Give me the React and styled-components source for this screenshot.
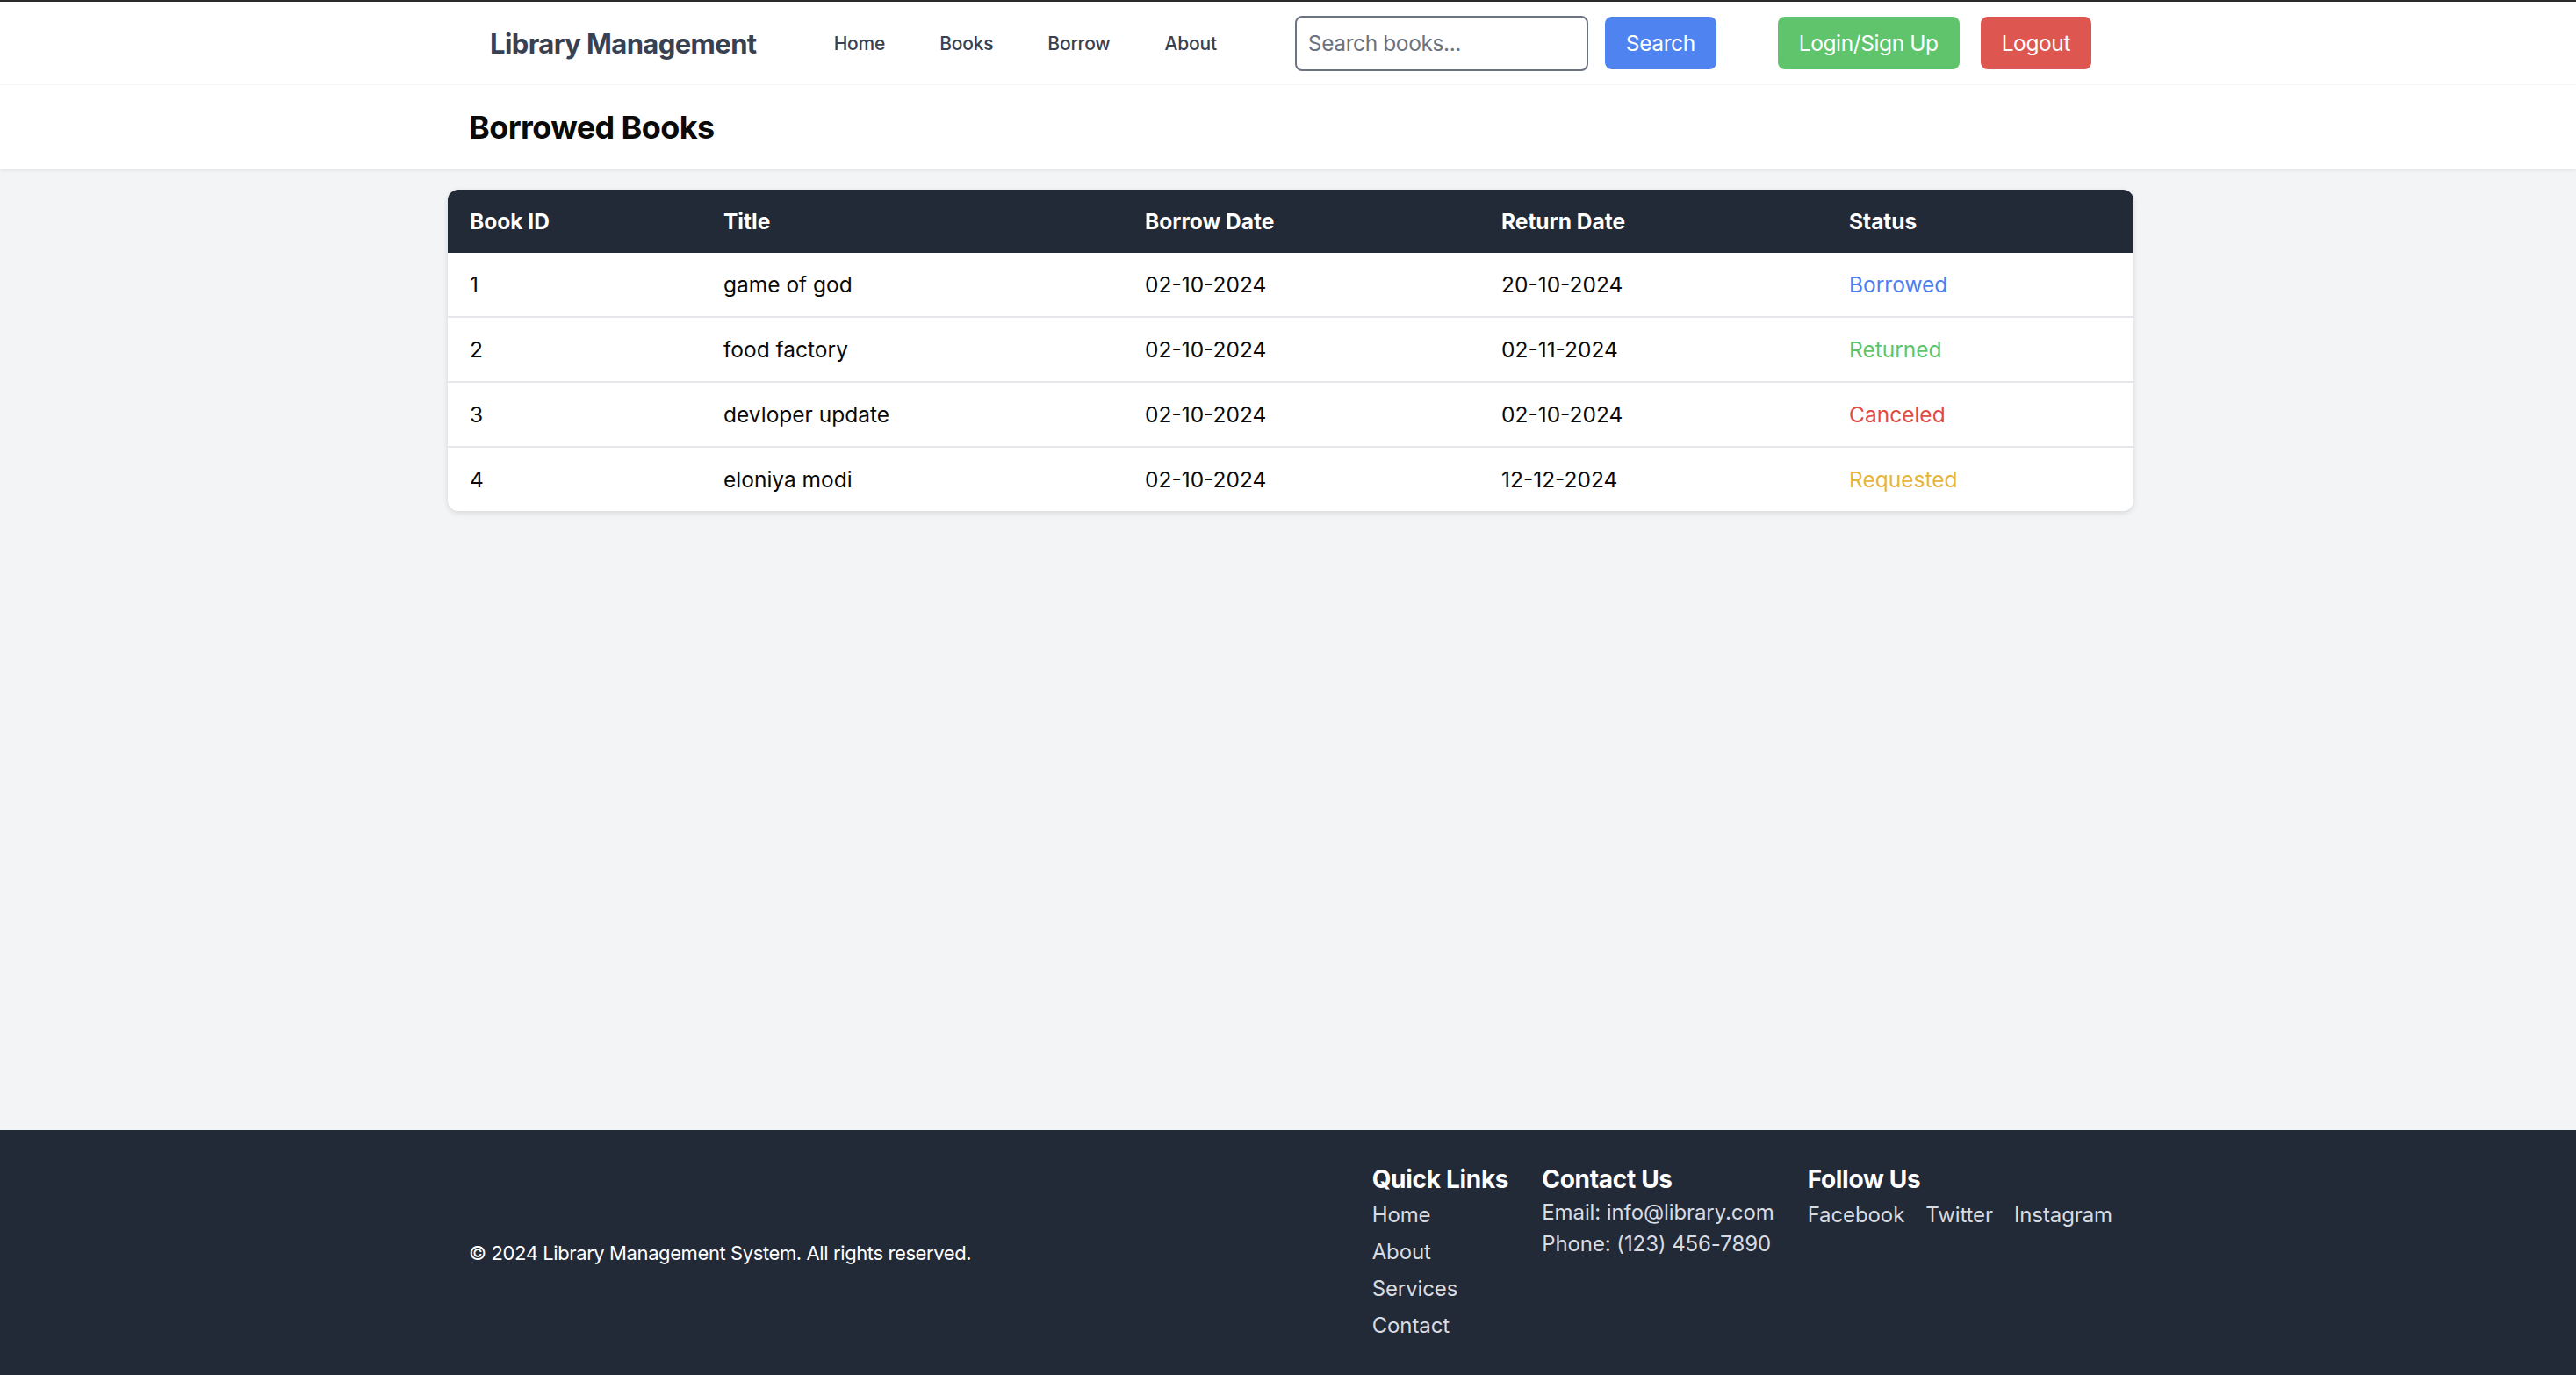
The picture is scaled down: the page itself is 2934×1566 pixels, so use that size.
import React from "react";
import styled, { createGlobalStyle } from "styled-components";

const GlobalStyle = createGlobalStyle`
  html, body { margin: 0; padding: 0; }
  body {
    font-family: Inter, "Noto Sans", "Liberation Sans", sans-serif;
    background: #f3f4f6;
    color: #111;
  }
  * { box-sizing: border-box; }
`;

const Page = styled.div`
  min-height: 100vh;
  display: flex;
  flex-direction: column;
`;

const NavBar = styled.nav`
  background: #fff;
  border-top: 2px solid #2b2b2b;
  border-bottom: 1px solid #f6f6f6;
  height: 97px;
`;

const Container = styled.div`
  width: 1920px;
  margin: 0 calc(50% - 963px) 0 calc(50% - 957px);
  padding: 0 ${(p) => p.$pad || 24}px;
`;

const NavInner = styled(Container)`
  height: 100%;
  display: flex;
  align-items: center;
`;

const Brand = styled.div`
  font-size: 31px;
  letter-spacing: -0.6px;
  font-weight: 700;
  color: #374151;
  margin-right: 88px;
  white-space: nowrap;
`;

const NavLinks = styled.div`
  display: flex;
  gap: 62px;
  margin-right: 89px;
`;

const NavLink = styled.a`
  font-size: 21px;
  letter-spacing: -0.2px;
  font-weight: 500;
  color: #374151;
  text-decoration: none;
`;

const SearchInput = styled.input`
  width: 334px;
  height: 63px;
  border: 2px solid #6b7280;
  border-radius: 8px;
  padding: 0 13px;
  font-family: inherit;
  font-size: 24.5px;
  letter-spacing: -0.4px;
  color: #111;
  margin-right: 19px;
  outline: none;
  &::placeholder { color: #6b7280; }
`;

const Button = styled.button`
  height: 60px;
  padding: 0 24px;
  border: none;
  border-radius: 8px;
  font-family: inherit;
  font-size: 24.5px;
  letter-spacing: -0.4px;
  color: #fff;
  background: ${(p) => p.$bg};
  margin-right: ${(p) => p.$mr || 0}px;
  cursor: pointer;
  white-space: nowrap;
`;

const HeaderBar = styled.header`
  background: #fff;
  height: 95px;
  display: flex;
  align-items: center;
  box-shadow: 0 2px 4px rgba(0, 0, 0, 0.08);
  position: relative;
`;

const PageTitle = styled.h1`
  margin: 0;
  font-size: 36px;
  letter-spacing: -0.6px;
  font-weight: 700;
  color: #0a0a0a;
`;

const Main = styled.main`
  flex: 1;
  padding-top: 24px;
`;

const TableCard = styled(Container)`
  padding: 0;
  border-radius: 12px;
  overflow: hidden;
  background: #fff;
  box-shadow: 0 2px 6px rgba(0, 0, 0, 0.12);
`;

const Table = styled.table`
  width: 100%;
  border-collapse: separate;
  border-spacing: 0;
  table-layout: fixed;
`;

const Col = styled.col`
  width: ${(p) => p.$w}px;
`;

const Th = styled.th`
  background: #222937;
  color: #fff;
  text-align: left;
  font-size: 24.5px;
  font-weight: 700;
  height: 72px;
  padding: 0 25px;
`;

const Tr = styled.tr`
  & + & td {
    border-top: 2px solid #e5e7eb;
    height: 74px;
  }
`;

const Td = styled.td`
  font-size: 24.5px;
  color: ${(p) => p.$color || "#0a0a0a"};
  height: 72px;
  padding: 0 25px;
`;

const Footer = styled.footer`
  background: #222937;
  color: #fff;
  height: 279px;
  display: flex;
  align-items: center;
`;

const FooterInner = styled(Container)`
  display: flex;
  justify-content: space-between;
  align-items: center;
`;

const Copyright = styled.p`
  margin: 0;
  font-size: 22px;
  letter-spacing: -0.4px;
`;

const FooterCols = styled.div`
  display: flex;
  gap: 38px;
  align-items: flex-start;
`;

const FooterCol = styled.div`
  display: flex;
  flex-direction: column;
`;

const FooterHeading = styled.h3`
  margin: 0;
  font-size: 28px;
  letter-spacing: -0.3px;
  font-weight: 700;
  line-height: 40px;
`;

const FooterList = styled.ul`
  list-style: none;
  margin: 0;
  padding: 0;
  display: flex;
  flex-direction: ${(p) => (p.$row ? "row" : "column")};
  gap: ${(p) => (p.$row ? 24 : 0)}px;
`;

const FooterItem = styled.li`
  font-size: 24px;
  letter-spacing: -0.1px;
  line-height: ${(p) => p.$lh || 42}px;
  color: #d8dbe0;
`;

const books = [
  { id: 1, title: "game of god", borrow: "02-10-2024", ret: "20-10-2024", status: "Borrowed" },
  { id: 2, title: "food factory", borrow: "02-10-2024", ret: "02-11-2024", status: "Returned" },
  { id: 3, title: "devloper update", borrow: "02-10-2024", ret: "02-10-2024", status: "Canceled" },
  { id: 4, title: "eloniya modi", borrow: "02-10-2024", ret: "12-12-2024", status: "Requested" },
];

const statusColors = {
  Borrowed: "#4d7ff0",
  Returned: "#5ec46b",
  Canceled: "#e04b45",
  Requested: "#e5b53c",
};

export default function App() {
  return (
    <Page>
      <GlobalStyle />
      <NavBar>
        <NavInner $pad={48}>
          <Brand>Library Management</Brand>
          <NavLinks>
            <NavLink href="#">Home</NavLink>
            <NavLink href="#">Books</NavLink>
            <NavLink href="#">Borrow</NavLink>
            <NavLink href="#">About</NavLink>
          </NavLinks>
          <SearchInput placeholder="Search books..." />
          <Button $bg="#4f83ef" $mr={70}>Search</Button>
          <Button $bg="#5fc46c" $mr={24}>Login/Sign Up</Button>
          <Button $bg="#de5650">Logout</Button>
        </NavInner>
      </NavBar>
      <HeaderBar>
        <Container>
          <PageTitle>Borrowed Books</PageTitle>
        </Container>
      </HeaderBar>
      <Main>
        <TableCard>
          <Table>
            <colgroup>
              <Col $w={289} />
              <Col $w={480} />
              <Col $w={406} />
              <Col $w={396} />
              <Col $w={349} />
            </colgroup>
            <thead>
              <tr>
                <Th>Book ID</Th>
                <Th>Title</Th>
                <Th>Borrow Date</Th>
                <Th>Return Date</Th>
                <Th>Status</Th>
              </tr>
            </thead>
            <tbody>
              {books.map((b) => (
                <Tr key={b.id}>
                  <Td>{b.id}</Td>
                  <Td>{b.title}</Td>
                  <Td>{b.borrow}</Td>
                  <Td>{b.ret}</Td>
                  <Td $color={statusColors[b.status]}>{b.status}</Td>
                </Tr>
              ))}
            </tbody>
          </Table>
        </TableCard>
      </Main>
      <Footer>
        <FooterInner>
          <Copyright>© 2024 Library Management System. All rights reserved.</Copyright>
          <FooterCols>
            <FooterCol>
              <FooterHeading>Quick Links</FooterHeading>
              <FooterList>
                <FooterItem>Home</FooterItem>
                <FooterItem>About</FooterItem>
                <FooterItem>Services</FooterItem>
                <FooterItem>Contact</FooterItem>
              </FooterList>
            </FooterCol>
            <FooterCol>
              <FooterHeading>Contact Us</FooterHeading>
              <FooterList>
                <FooterItem $lh={36}>Email: info@library.com</FooterItem>
                <FooterItem $lh={36}>Phone: (123) 456-7890</FooterItem>
              </FooterList>
            </FooterCol>
            <FooterCol>
              <FooterHeading>Follow Us</FooterHeading>
              <FooterList $row>
                <FooterItem>Facebook</FooterItem>
                <FooterItem>Twitter</FooterItem>
                <FooterItem>Instagram</FooterItem>
              </FooterList>
            </FooterCol>
          </FooterCols>
        </FooterInner>
      </Footer>
    </Page>
  );
}
